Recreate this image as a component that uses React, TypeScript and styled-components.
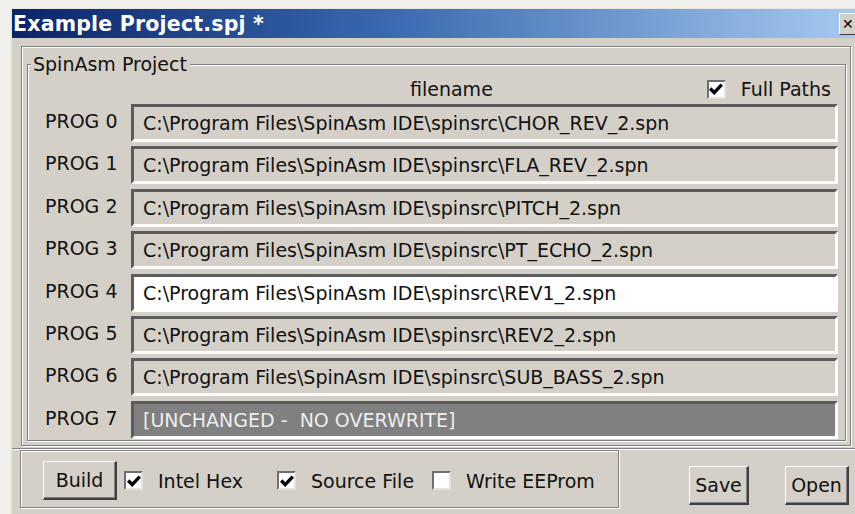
import React from 'react';
import styled, { createGlobalStyle } from 'styled-components';

const GlobalStyle = createGlobalStyle`
  html, body {
    margin: 0;
    padding: 0;
    background: #f1f0ec;
    overflow: hidden;
  }
  body {
    font-family: "DejaVu Sans", Verdana, sans-serif;
    font-size: 19px;
    color: #111;
  }
`;

const Window = styled.div`
  box-sizing: border-box;
  width: 847px;
  height: 506px;
  margin: 8px 0 0 10px;
  background: #d4d0c8;
  border-left: 2px solid #e8e6e1;
  border-top: 1px solid #e8e6e1;
  display: flex;
  flex-direction: column;
`;

const TitleBar = styled.div`
  height: 29px;
  display: flex;
  align-items: center;
  background: linear-gradient(to right, #0a246a 0%, #3a6ab0 45%, #a6caf0 100%);
  padding-left: 1px;
`;

const Title = styled.span`
  color: #fff;
  font-weight: bold;
  font-size: 20.5px;
  letter-spacing: 0.2px;
`;

const CloseButton = styled.div`
  box-sizing: border-box;
  margin-left: auto;
  width: 18px;
  height: 22px;
  background: #d4d0c8;
  border-top: 1px solid #fff;
  border-left: 1px solid #fff;
  border-bottom: 1px solid #404040;
  display: flex;
  align-items: center;
  padding-left: 2px;
  font-size: 14px;
  color: #000;
`;

const Client = styled.div`
  flex: 1;
  display: flex;
  flex-direction: column;
`;

const OuterPanel = styled.div`
  box-sizing: border-box;
  height: 400px;
  margin: 8px 6px 0 9px;
  padding: 17px 4px 4px 5px;
  border: 1px solid #808080;
  box-shadow: inset 1px 1px 0 #fff, 1px 1px 0 #fff;
  display: flex;
`;

const GroupFrame = styled.div`
  position: relative;
  flex: 1;
  border: 1px solid #808080;
  box-shadow: inset 1px 1px 0 #fff, 1px 1px 0 #fff;
  padding: 12px 7px 0 17px;
`;

const Legend = styled.span`
  position: absolute;
  top: -12px;
  left: 3px;
  padding: 0 3px 0 2px;
  background: #d4d0c8;
  line-height: 22px;
`;

const HeaderRow = styled.div`
  display: flex;
  align-items: center;
  height: 24px;
  margin-bottom: 3px;
`;

const Caption = styled.span`
  margin-left: 365px;
`;

const CheckLabel = styled.label<{ $width?: number }>`
  display: flex;
  align-items: center;
  gap: 15px;
  ${(p) => (p.$width ? `width: ${p.$width}px;` : '')}
`;

const HeaderCheck = styled(CheckLabel)`
  margin-left: auto;
  margin-right: 7px;
`;

const Box = styled.span<{ $checked: boolean }>`
  box-sizing: border-box;
  width: 19px;
  height: 19px;
  display: flex;
  align-items: center;
  justify-content: center;
  background: #fff;
  border-top: 2px solid #6e6e6e;
  border-left: 2px solid #6e6e6e;
  border-bottom: 2px solid #e4e2dc;
  border-right: 2px solid #e4e2dc;
  svg {
    visibility: ${(p) => (p.$checked ? 'visible' : 'hidden')};
  }
`;

const Rows = styled.div`
  display: flex;
  flex-direction: column;
  gap: 4.4px;
`;

const Row = styled.div`
  display: flex;
  height: 38px;
`;

const ProgLabel = styled.span`
  width: 86px;
  flex-shrink: 0;
  padding-top: 6px;
`;

type FieldKind = 'readonly' | 'active' | 'unchanged';

const fieldBg: Record<FieldKind, string> = {
  readonly: '#d4d0c8',
  active: '#ffffff',
  unchanged: '#808080',
};

const PathField = styled.div<{ $kind: FieldKind }>`
  box-sizing: border-box;
  flex: 1;
  display: flex;
  align-items: center;
  padding-left: 9px;
  white-space: pre;
  background: ${(p) => fieldBg[p.$kind]};
  color: ${(p) => (p.$kind === 'unchanged' ? '#ededed' : '#111')};
  border-top: 3px solid #5c5c5c;
  border-left: 3px solid #5c5c5c;
  border-bottom: 3px solid #fdfdfd;
  border-right: 3px solid #fdfdfd;
`;

const BottomBar = styled.div`
  flex: 1;
  margin-top: 2px;
  border-top: 1px solid #808080;
  box-shadow: inset 0 1px 0 #fff;
  padding-top: 1px;
  display: flex;
  align-items: flex-start;
`;

const OptionsPanel = styled.div`
  box-sizing: border-box;
  width: 599px;
  height: 58px;
  margin-left: 8px;
  padding: 10px 0 0 22px;
  border: 1px solid #808080;
  box-shadow: inset 1px 1px 0 #fff, 1px 1px 0 #fff;
  display: flex;
  align-items: flex-start;
`;

const Options = styled.div`
  display: flex;
  align-items: center;
  height: 39px;
  margin-left: 7px;
`;

const Button = styled.button<{ $width: number }>`
  box-sizing: border-box;
  width: ${(p) => p.$width}px;
  height: 39px;
  padding: 0;
  background: #d4d0c8;
  font-family: "DejaVu Sans", Verdana, sans-serif;
  font-size: 19px;
  color: #111;
  border-top: 1px solid #fff;
  border-left: 1px solid #fff;
  border-bottom: 2px solid #404040;
  border-right: 2px solid #404040;
  box-shadow: inset -1px -1px 0 #808080;
`;

const DialogButtons = styled.div`
  display: flex;
  gap: 36px;
  margin: 16px 8px 0 auto;
`;

const Check = () => (
  <svg width="14" height="12" viewBox="0 0 14 12">
    <path d="M1.2 5.5 L5.2 9.6 L12.8 1.6" fill="none" stroke="#000" strokeWidth="3.4" />
  </svg>
);

const Checkbox: React.FC<{ checked: boolean; label: string; width?: number }> = ({
  checked,
  label,
  width,
}) => (
  <CheckLabel $width={width}>
    <Box $checked={checked}>
      <Check />
    </Box>
    {label}
  </CheckLabel>
);

const src = 'C:\\Program Files\\SpinAsm IDE\\spinsrc\\';

const programs: { path: string; kind: FieldKind }[] = [
  { path: src + 'CHOR_REV_2.spn', kind: 'readonly' },
  { path: src + 'FLA_REV_2.spn', kind: 'readonly' },
  { path: src + 'PITCH_2.spn', kind: 'readonly' },
  { path: src + 'PT_ECHO_2.spn', kind: 'readonly' },
  { path: src + 'REV1_2.spn', kind: 'active' },
  { path: src + 'REV2_2.spn', kind: 'readonly' },
  { path: src + 'SUB_BASS_2.spn', kind: 'readonly' },
  { path: '[UNCHANGED -  NO OVERWRITE]', kind: 'unchanged' },
];

const App: React.FC = () => (
  <>
    <GlobalStyle />
    <Window>
      <TitleBar>
        <Title>Example Project.spj *</Title>
        <CloseButton>✕</CloseButton>
      </TitleBar>
      <Client>
        <OuterPanel>
          <GroupFrame>
            <Legend>SpinAsm Project</Legend>
            <HeaderRow>
              <Caption>filename</Caption>
              <HeaderCheck>
                <Box $checked>
                  <Check />
                </Box>
                Full Paths
              </HeaderCheck>
            </HeaderRow>
            <Rows>
              {programs.map((p, i) => (
                <Row key={i}>
                  <ProgLabel>PROG {i}</ProgLabel>
                  <PathField $kind={p.kind}>{p.path}</PathField>
                </Row>
              ))}
            </Rows>
          </GroupFrame>
        </OuterPanel>
        <BottomBar>
          <OptionsPanel>
            <Button $width={74}>Build</Button>
            <Options>
              <Checkbox checked label="Intel Hex" width={153} />
              <Checkbox checked label="Source File" width={155} />
              <Checkbox checked={false} label="Write EEProm" />
            </Options>
          </OptionsPanel>
          <DialogButtons>
            <Button $width={60}>Save</Button>
            <Button $width={64}>Open</Button>
          </DialogButtons>
        </BottomBar>
      </Client>
    </Window>
  </>
);

export default App;
